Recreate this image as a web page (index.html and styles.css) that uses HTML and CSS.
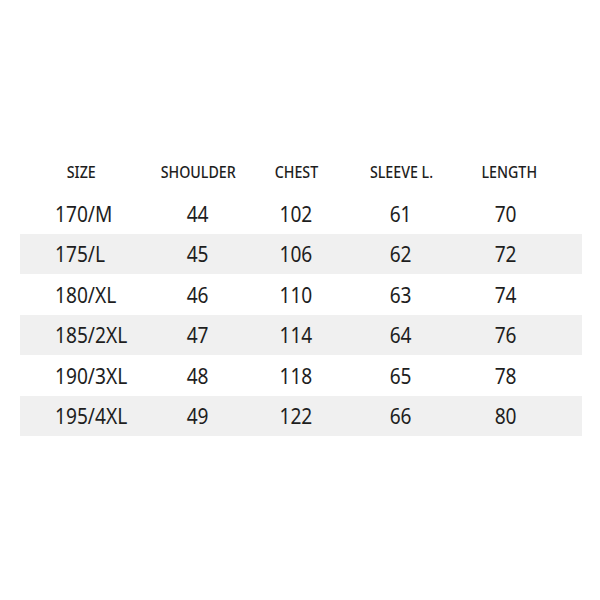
FILE: index.html
```html
<!DOCTYPE html>
<html>
<head>
<meta charset="utf-8">
<link rel="stylesheet" href="styles.css">
</head>
<body>
<div class="table">
  <div class="row head">
    <div class="cell"><span>SIZE</span></div><div class="cell"><span>SHOULDER</span></div><div class="cell"><span>CHEST</span></div><div class="cell"><span>SLEEVE L.</span></div><div class="cell len"><span>LENGTH</span></div><div></div>
  </div>
  <div class="row">
    <div class="cell size"><span>170/M</span></div><div class="cell"><span>44</span></div><div class="cell"><span>102</span></div><div class="cell"><span>61</span></div><div class="cell"><span>70</span></div><div></div>
  </div>
  <div class="row alt">
    <div class="cell size"><span>175/L</span></div><div class="cell"><span>45</span></div><div class="cell"><span>106</span></div><div class="cell"><span>62</span></div><div class="cell"><span>72</span></div><div></div>
  </div>
  <div class="row">
    <div class="cell size"><span>180/XL</span></div><div class="cell"><span>46</span></div><div class="cell"><span>110</span></div><div class="cell"><span>63</span></div><div class="cell"><span>74</span></div><div></div>
  </div>
  <div class="row alt">
    <div class="cell size"><span>185/2XL</span></div><div class="cell"><span>47</span></div><div class="cell"><span>114</span></div><div class="cell"><span>64</span></div><div class="cell"><span>76</span></div><div></div>
  </div>
  <div class="row">
    <div class="cell size"><span>190/3XL</span></div><div class="cell"><span>48</span></div><div class="cell"><span>118</span></div><div class="cell"><span>65</span></div><div class="cell"><span>78</span></div><div></div>
  </div>
  <div class="row alt">
    <div class="cell size"><span>195/4XL</span></div><div class="cell"><span>49</span></div><div class="cell"><span>122</span></div><div class="cell"><span>66</span></div><div class="cell"><span>80</span></div><div></div>
  </div>
</div>
</body>
</html>
```
FILE: styles.css
```css
html, body {
  margin: 0;
  padding: 0;
  background: #ffffff;
}
body {
  width: 600px;
  height: 600px;
  padding-top: 151px;
  box-sizing: border-box;
  font-family: "Noto Sans", "Open Sans", sans-serif;
  color: #1e1e1e;
}
.table {
  margin: 0 18px 0 20px;
  display: flex;
  flex-direction: column;
}
.row {
  display: grid;
  grid-template-columns: 122px 112px 84px 126px 84px 1fr;
  height: 40.5px;
  align-items: center;
  font-size: 22px;
  line-height: 1;
  padding-bottom: 1px;
  box-sizing: border-box;
}
.row.head {
  height: 42px;
  font-size: 16px;
  font-weight: 500;
}
.row.alt {
  background: #f0f0f0;
}
.cell {
  text-align: center;
  white-space: nowrap;
}
.cell span {
  display: inline-block;
  transform: scaleX(0.87);
  transform-origin: center;
}
.row.head .cell span {
  transform: scaleX(0.89);
}
.row.head .cell.len {
  padding-left: 6px;
}
.cell.size {
  text-align: left;
  padding-left: 35px;
}
.cell.size span {
  transform-origin: left center;
}
```
